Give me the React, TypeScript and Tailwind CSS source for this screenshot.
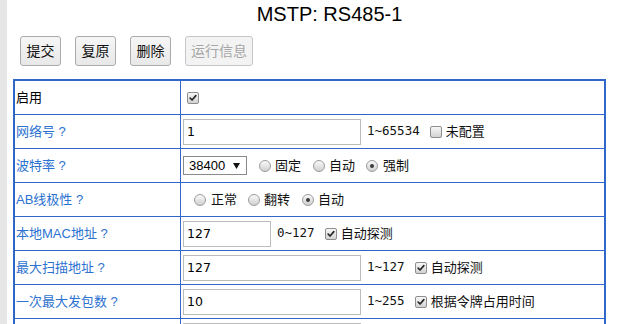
import React from "react";

const BLUE_BORDER = "border-[#3166c9]";

function Check({ checked, className = "" }: { checked?: boolean; className?: string }) {
  return (
    <span
      className={`inline-flex h-[12px] w-[12px] shrink-0 items-center justify-center rounded-[2px] border border-[#8e8e8e] bg-linear-to-b from-[#f7f7f7] to-[#d2d2d2] ${className}`}
    >
      {checked && (
        <svg viewBox="0 0 12 12" className="h-[12px] w-[12px]">
          <path d="M2.6 6.2 L4.9 8.4 L9.4 3.2" stroke="#262626" strokeWidth="2" fill="none" strokeLinecap="round" strokeLinejoin="round" />
        </svg>
      )}
    </span>
  );
}

function Radio({ checked, className = "" }: { checked?: boolean; className?: string }) {
  return (
    <span
      className={`inline-flex h-[12px] w-[12px] shrink-0 items-center justify-center rounded-full border border-[#9c9c9c] bg-linear-to-b from-[#fafafa] to-[#d0d0d0] ${className}`}
    >
      {checked && <span className="h-[4px] w-[4px] rounded-full bg-[#3c3c3c]" />}
    </span>
  );
}

function TextInput({ value, w }: { value: string; w: string }) {
  return (
    <input
      readOnly
      defaultValue={value}
      className={`${w} h-[26px] border border-[#bcbcbc] bg-white pl-[3px] font-['DejaVu_Sans',sans-serif] text-[12.5px] text-black outline-none`}
    />
  );
}

function Range({ text, className = "" }: { text: string; className?: string }) {
  return <span className={`font-['DejaVu_Sans_Mono',monospace] text-[12.5px] text-[#111] ${className}`}>{text}</span>;
}

function Row({
  label,
  black,
  first,
  children,
}: {
  label: string;
  black?: boolean;
  first?: boolean;
  children?: React.ReactNode;
}) {
  return (
    <div className={`flex ${first ? "h-[33px]" : `h-[34px] border-t ${BLUE_BORDER}`}`}>
      <div
        className={`flex w-[166px] shrink-0 items-center border-r ${BLUE_BORDER} pl-[1px] text-[13px] ${
          black ? "text-black" : "text-[#2c72d0]"
        }`}
      >
        {label}
      </div>
      <div className="flex flex-1 items-center pl-[2px] text-[13px] text-[#111]">{children}</div>
    </div>
  );
}

function Btn({ children, w, disabled }: { children: React.ReactNode; w: string; disabled?: boolean }) {
  return (
    <div
      className={`flex h-[30px] ${w} items-center justify-center rounded-[3px] border text-[14px] ${
        disabled
          ? "border-[#c6c6c6] bg-[#f3f3f3] text-[#a6a6a6]"
          : "border-[#ababab] bg-linear-to-b from-[#f6f6f6] to-[#e8e8e8] text-[#111]"
      }`}
    >
      {children}
    </div>
  );
}

export default function App() {
  return (
    <div className="flex h-[324px] w-[634px] overflow-hidden bg-white font-['Liberation_Sans','Noto_Sans_CJK_SC',sans-serif]">
      <div className="w-[7px] shrink-0 bg-[#e6e6e6]" />
      <div className="flex min-w-0 flex-1 flex-col">
        <div className="pl-[18px] pt-[2px] text-center text-[20px] leading-[24px] text-black">MSTP: RS485-1</div>
        <div className="ml-[13px] mt-[10px] flex gap-[14px]">
          <Btn w="w-[41px]">提交</Btn>
          <Btn w="w-[41px]">复原</Btn>
          <Btn w="w-[41px]">删除</Btn>
          <Btn w="w-[68px]" disabled>
            运行信息
          </Btn>
        </div>
        <div className={`ml-[6px] mt-[13px] w-[593px] shrink-0 border-2 ${BLUE_BORDER}`}>
          <Row label="启用" black first>
            <Check checked className="ml-[4px]" />
          </Row>
          <Row label="网络号 ?">
            <TextInput value="1" w="w-[178px]" />
            <Range text="1~65534" className="ml-[6px]" />
            <Check className="ml-[10px]" />
            <span className="ml-[4px]">未配置</span>
          </Row>
          <Row label="波特率 ?">
            <div className="flex h-[19px] w-[64px] items-center justify-between border border-[#8a8a8a] bg-white pl-[5px] pr-[6px] text-[13px] text-black">
              <span>38400</span>
              <svg viewBox="0 0 7 6" className="h-[6px] w-[7px]">
                <polygon points="0,0 7,0 3.5,6" fill="#111" />
              </svg>
            </div>
            <Radio className="ml-[12px]" />
            <span className="ml-[4px]">固定</span>
            <Radio className="ml-[12px]" />
            <span className="ml-[4px]">自动</span>
            <Radio checked className="ml-[11px]" />
            <span className="ml-[5px]">强制</span>
          </Row>
          <Row label="AB线极性 ?">
            <Radio className="ml-[11px]" />
            <span className="ml-[5px]">正常</span>
            <Radio className="ml-[11px]" />
            <span className="ml-[4px]">翻转</span>
            <Radio checked className="ml-[12px]" />
            <span className="ml-[4px]">自动</span>
          </Row>
          <Row label="本地MAC地址 ?">
            <TextInput value="127" w="w-[88px]" />
            <Range text="0~127" className="ml-[6px]" />
            <Check checked className="ml-[10px]" />
            <span className="ml-[4px]">自动探测</span>
          </Row>
          <Row label="最大扫描地址 ?">
            <TextInput value="127" w="w-[178px]" />
            <Range text="1~127" className="ml-[6px]" />
            <Check checked className="ml-[10px]" />
            <span className="ml-[4px]">自动探测</span>
          </Row>
          <Row label="一次最大发包数 ?">
            <TextInput value="10" w="w-[178px]" />
            <Range text="1~255" className="ml-[6px]" />
            <Check checked className="ml-[10px]" />
            <span className="ml-[4px]">根据令牌占用时间</span>
          </Row>
          <Row label="">
            <TextInput value="" w="w-[178px]" />
          </Row>
        </div>
      </div>
    </div>
  );
}
